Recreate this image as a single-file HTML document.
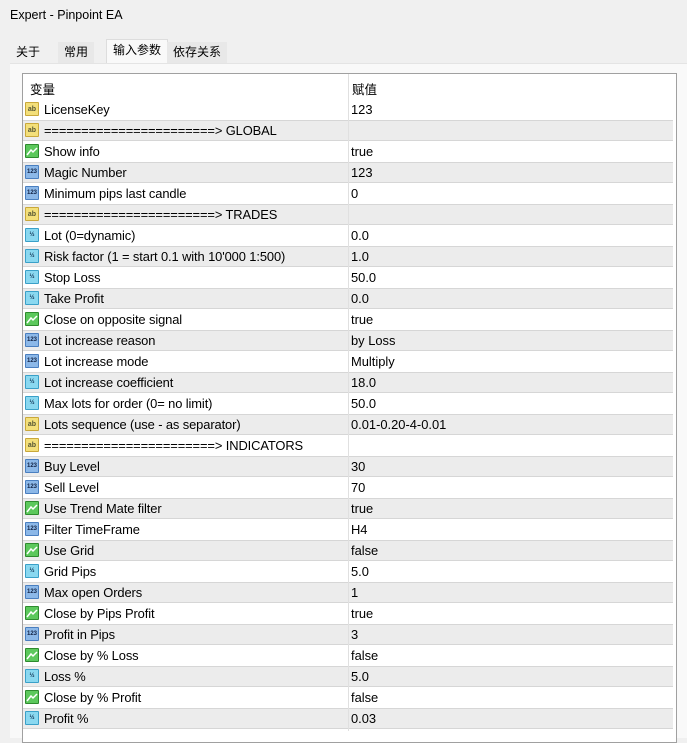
<!DOCTYPE html>
<html><head><meta charset="utf-8"><style>
*{margin:0;padding:0;box-sizing:border-box}
body{width:687px;height:738px;overflow:hidden;background:#f0f0f0;font-family:"Liberation Sans","Noto Sans CJK SC",sans-serif;font-size:12.5px;color:#000;position:relative}
.title{position:absolute;left:10px;top:8px;font-size:12.5px}
.tab{position:absolute;top:42px;height:21px;line-height:20px;font-size:12px;padding:0 6px}
.panel{position:absolute;left:10px;top:63px;width:677px;height:675px;background:#f9f9f9;border-top:1px solid #e4e4e4}
.tbl{position:absolute;left:22px;top:73px;width:655px;height:670px;background:#fff;border:1px solid #a0a0a0}
.hdr{position:absolute;left:0;top:0;width:100%;height:25px}
.hdr span{position:absolute;top:5px}
.row{position:absolute;left:0;width:650px;height:21px}
.row.g{background:#ececec;border-top:1px solid #d6d6d6;border-bottom:1px solid #d6d6d6}
.row .n{position:absolute;left:21px;top:3px;white-space:nowrap;font-size:12.9px;letter-spacing:-0.1px}
.row .v{position:absolute;left:328px;top:3px;font-size:12.9px}
.row.g .n,.row.g .v{top:2px}
.ic{position:absolute;left:2px;top:3px;width:14px;height:14px;border-radius:1px;font-size:7px;line-height:13px;text-align:center;font-weight:bold;overflow:hidden}
.row.g .ic{top:2px}
.ab{background:#f3df7a;border:1px solid #c9a83a;color:#553}
.bo{background:#5cc85c;border:1px solid #2e8b2e}
.nu{background:#8cb8e8;border:1px solid #4a7fc0;color:#124;font-size:6px}
.db{background:#8ad8f0;border:1px solid #3aa0c8;color:#135;font-size:6px}
.vl{position:absolute;left:325px;top:0;width:1px;height:657px;background:#e0e0e0;z-index:2}
</style></head><body>
<div class="title">Expert - Pinpoint EA</div>
<div class="tab" style="left:10px;background:#f0f0f0">关于</div>
<div class="tab" style="left:58px;background:#e8e8e8">常用</div>
<div class="tab" style="left:106px;top:39px;height:25px;background:#f9f9f9;border:1px solid #ddd;border-bottom:none">输入参数</div>
<div class="tab" style="left:167px;background:#e8e8e8">依存关系</div>
<div class="panel"></div>
<div class="tbl">
<div class="hdr"><span style="left:7px">变量</span><span style="left:329px">赋值</span></div>
<div id="rows"></div>
<div class="vl"></div>
</div>
<script>
var d=[["ab","LicenseKey","123"],["ab","=======================> GLOBAL",""],["bo","Show info","true"],["nu","Magic Number","123"],["nu","Minimum pips last candle","0"],["ab","=======================> TRADES",""],["db","Lot (0=dynamic)","0.0"],["db","Risk factor (1 = start 0.1 with 10'000 1:500)","1.0"],["db","Stop Loss","50.0"],["db","Take Profit","0.0"],["bo","Close on opposite signal","true"],["nu","Lot increase reason","by Loss"],["nu","Lot increase mode","Multiply"],["db","Lot increase coefficient","18.0"],["db","Max lots for order (0= no limit)","50.0"],["ab","Lots sequence (use - as separator)","0.01-0.20-4-0.01"],["ab","=======================> INDICATORS",""],["nu","Buy Level","30"],["nu","Sell Level","70"],["bo","Use Trend Mate filter","true"],["nu","Filter TimeFrame","H4"],["bo","Use Grid","false"],["db","Grid Pips","5.0"],["nu","Max open Orders","1"],["bo","Close by Pips Profit","true"],["nu","Profit in Pips","3"],["bo","Close by % Loss","false"],["db","Loss %","5.0"],["bo","Close by % Profit","false"],["db","Profit %","0.03"]];
var bo='<svg width="12" height="12" viewBox="0 0 12 12"><path d="M1 10 L5 5 L7 7 L11 3" stroke="#fff" stroke-width="1.5" fill="none"/></svg>';
var t={ab:"ab",bo:bo,nu:"123",db:"½"},h="";
d.forEach(function(r,i){h+='<div class="row'+(i%2?' g':'')+'" style="top:'+(25+i*21)+'px"><div class="ic '+r[0]+'">'+t[r[0]]+'</div><span class="n">'+r[1].replace(/>/g,'&gt;')+'</span><span class="v">'+r[2]+'</span></div>';});
document.getElementById('rows').innerHTML=h;
</script>
</body></html>
